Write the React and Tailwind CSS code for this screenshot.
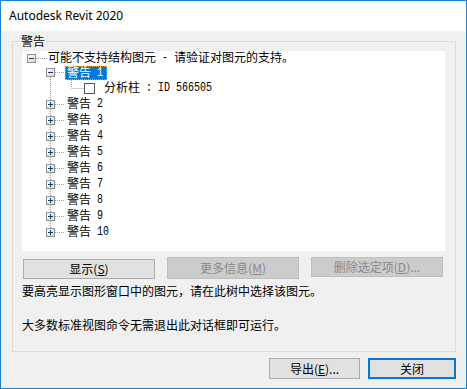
const cjk = { fontFamily: '"Noto Sans CJK SC", "Noto Sans", sans-serif' };

// half-width run, 6px per char like the dialog's bitmap font
const H = ({ children }) => (
  <span
    className="inline-block text-[10px] leading-none whitespace-pre origin-bottom scale-y-[1.25]"
    style={{ fontFamily: '"Liberation Mono", monospace' }}
  >
    {children}
  </span>
);

const TreeBox = ({ open }) => (
  <svg width="9" height="9" viewBox="0 0 9 9" className="shrink-0 relative">
    <defs>
      <linearGradient id={open ? "gm" : "gp"} x1="0" y1="0" x2="1" y2="1">
        <stop offset="0" stopColor="#ffffff" />
        <stop offset="1" stopColor="#d4d4d4" />
      </linearGradient>
    </defs>
    <rect x="0.5" y="0.5" width="8" height="8" fill={`url(#${open ? "gm" : "gp"})`} stroke="#919191" />
    <line x1="2" y1="4.5" x2="7" y2="4.5" stroke="#1c3a6e" />
    {!open && <line x1="4.5" y1="2" x2="4.5" y2="7" stroke="#1c3a6e" />}
  </svg>
);

const Btn = ({ children, disabled, def, className = "" }) => (
  <button
    className={`flex items-center justify-center text-[12px] leading-none ${
      disabled
        ? "bg-[#cccccc] border border-[#bfbfbf] text-[#8a8a8a]"
        : def
        ? "bg-[#e1e1e1] border-2 border-[#0078d7] text-black"
        : "bg-[#e1e1e1] border border-[#adadad] text-black"
    } ${className}`}
    style={cjk}
  >
    {children}
  </button>
);

export default function App() {
  const warnings = [2, 3, 4, 5, 6, 7, 8, 9, 10];
  // row centres in tree coords
  const level1 = [21.5, ...warnings.map((_, i) => 53 + i * 16)];

  return (
    <div className="w-[467px] h-[389px] border border-[#1883d7] bg-[#f0f0f0] flex flex-col overflow-hidden">
      {/* title bar */}
      <div className="h-[30px] bg-white flex items-center pl-[8px] shrink-0">
        <span className="text-[12px] text-black" style={{ fontFamily: '"Noto Sans", sans-serif' }}>
          Autodesk Revit 2020
        </span>
      </div>

      {/* group box */}
      <div className="relative mt-[10px] ml-[11px] w-[444px] h-[311px] border border-[#dcdcdc] pl-[9px] pt-[9px] pr-[9px] flex flex-col">
        <span className="absolute left-[7px] top-[-7px] bg-[#f0f0f0] px-[1px] text-[12px] leading-[12px] text-black" style={cjk}>
          警告
        </span>

        {/* tree */}
        <div className="relative w-[423px] h-[200px] bg-white text-[12px] leading-none text-black" style={cjk}>
          <svg className="absolute left-0 top-0" width="423" height="200">
            <g stroke="#a0a0a0" strokeDasharray="1 1">
              <line x1="14" y1="7.5" x2="25" y2="7.5" />
              <line x1="28.5" y1="22" x2="28.5" y2="181" />
              {level1.map((y) => (
                <line key={y} x1="33" y1={Math.floor(y) + 0.5} x2="43" y2={Math.floor(y) + 0.5} />
              ))}
              <line x1="49.5" y1="29" x2="49.5" y2="37" />
              <line x1="49.5" y1="37.5" x2="62" y2="37.5" />
            </g>
          </svg>

          <div className="h-[14px] flex items-center pl-[5px]">
            <TreeBox open />
            <span className="ml-[12px] relative">
              可能不支持结构图元<H> - </H>请验证对图元的支持。
            </span>
          </div>
          <div className="h-[15px] flex items-center pl-[24px]">
            <TreeBox open />
            <span className="ml-[10px] relative h-[14px] flex items-center pl-[1px] pr-[3px] bg-[#0078d7] text-white border border-dotted border-[#f0a030]">
              <span>
                警告<H> 1</H>
              </span>
            </span>
          </div>
          <div className="h-[16px] flex items-center pl-[62px]">
            <span className="relative w-[11px] h-[11px] border border-[#555555] bg-white shrink-0" />
            <span className="ml-[9px] relative">
              分析柱<H> : ID 566505</H>
            </span>
          </div>
          {warnings.map((n) => (
            <div key={n} className="h-[16px] flex items-center pl-[24px]">
              <TreeBox />
              <span className="ml-[12px] relative">
                警告<H> {n}</H>
              </span>
            </div>
          ))}
        </div>

        {/* buttons */}
        <div className="flex items-start gap-[12px] mt-[6px] pl-[1px]">
          <Btn className="w-[132px] h-[20px] mt-[2px]">
            显示(<u>S</u>)
          </Btn>
          <Btn disabled className="w-[132px] h-[22px]">
            更多信息(<u>M</u>)
          </Btn>
          <Btn disabled className="w-[132px] h-[20px]">
            删除选定项(<u>D</u>)...
          </Btn>
        </div>

        <p className="mt-[4px] text-[12px] leading-[16px] text-black" style={cjk}>
          要高亮显示图形窗口中的图元，请在此树中选择该图元。
        </p>
        <p className="mt-[18px] text-[12px] leading-[16px] text-black" style={cjk}>
          大多数标准视图命令无需退出此对话框即可运行。
        </p>
      </div>

      {/* bottom buttons */}
      <div className="flex justify-end gap-[8px] mt-[6px] pr-[10px]">
        <Btn className="w-[91px] h-[21px]">
          导出(<u>E</u>)...
        </Btn>
        <Btn def className="w-[88px] h-[21px]">
          关闭
        </Btn>
      </div>
    </div>
  );
}
